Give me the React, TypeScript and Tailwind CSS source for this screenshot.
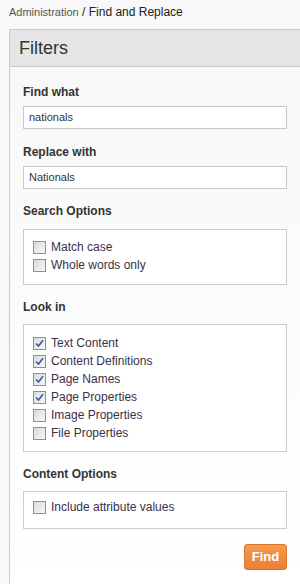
import React from 'react';

const Check = ({ checked }: { checked: boolean }) => (
  <span className="inline-flex items-center justify-center w-[13px] h-[13px] border border-[#8e8f8f] bg-gradient-to-br from-[#dcdcdc] to-[#f7f7f7] shrink-0">
    {checked && (
      <svg width="9" height="9" viewBox="0 0 9 9">
        <path d="M1 4.5 L3.5 7 L8 1.2" fill="none" stroke="#3a56b0" strokeWidth={1.6} />
      </svg>
    )}
  </span>
);

const Option = ({ label, checked = false }: { label: string; checked?: boolean }) => (
  <label className="flex items-center gap-[5px] h-[18px] text-[12px] text-[#3a2f4a]">
    <Check checked={checked} />
    <span>{label}</span>
  </label>
);

const Label = ({ children }: { children: React.ReactNode }) => (
  <div className="text-[12px] font-bold text-[#333] leading-[14px]">{children}</div>
);

export default function App() {
  return (
    <div className="min-h-[584px] bg-[#f8f8f8] font-['Liberation_Sans',Arial,sans-serif] overflow-hidden">
      <div className="pl-[9px] pt-[4px] h-[29px] leading-[14px]">
        <span className="text-[11px] text-[#555]">Administration</span>
        <span className="text-[12px] text-[#222]"> / Find and Replace</span>
      </div>

      <div className="ml-[9px] border-l border-[#cccccc] w-[291px]">
        <div className="h-[38px] bg-[#e5e5e5] border-y border-[#cccccc] pl-[9px] flex items-center">
          <span className="text-[18px] text-[#333]">Filters</span>
        </div>

        <div className="bg-gradient-to-b from-[#f8f8f8] to-white pl-[13px] pt-[18px] pb-[14px]">
          <Label>Find what</Label>
          <div className="mt-[7px] w-[264px] h-[23px] border border-[#c8c8c8] bg-white flex items-center px-[5px] text-[11px] text-[#333]">
            nationals
          </div>

          <div className="mt-[16px]">
            <Label>Replace with</Label>
          </div>
          <div className="mt-[7px] w-[264px] h-[23px] border border-[#c8c8c8] bg-white flex items-center px-[5px] text-[11px] text-[#333]">
            Nationals
          </div>

          <div className="mt-[15px]">
            <Label>Search Options</Label>
          </div>
          <div className="mt-[11px] w-[264px] h-[56px] border border-[#cccccc] bg-white pl-[9px] pt-[8px]">
            <Option label="Match case" />
            <Option label="Whole words only" />
          </div>

          <div className="mt-[15px]">
            <Label>Look in</Label>
          </div>
          <div className="mt-[10px] w-[264px] h-[128px] border border-[#cccccc] bg-white pl-[9px] pt-[9px]">
            <Option label="Text Content" checked />
            <Option label="Content Definitions" checked />
            <Option label="Page Names" checked />
            <Option label="Page Properties" checked />
            <Option label="Image Properties" />
            <Option label="File Properties" />
          </div>

          <div className="mt-[15px]">
            <Label>Content Options</Label>
          </div>
          <div className="mt-[10px] w-[264px] h-[38px] border border-[#cccccc] bg-white pl-[9px] pt-[6px]">
            <Option label="Include attribute values" />
          </div>

          <div className="mt-[15px] w-[264px] flex justify-end">
            <button className="w-[43px] h-[26px] rounded-[3px] border border-[#d8782e] bg-gradient-to-b from-[#f49a4e] to-[#ea8133] text-white text-[13px] font-bold">
              Find
            </button>
          </div>
        </div>
      </div>
    </div>
  );
}
